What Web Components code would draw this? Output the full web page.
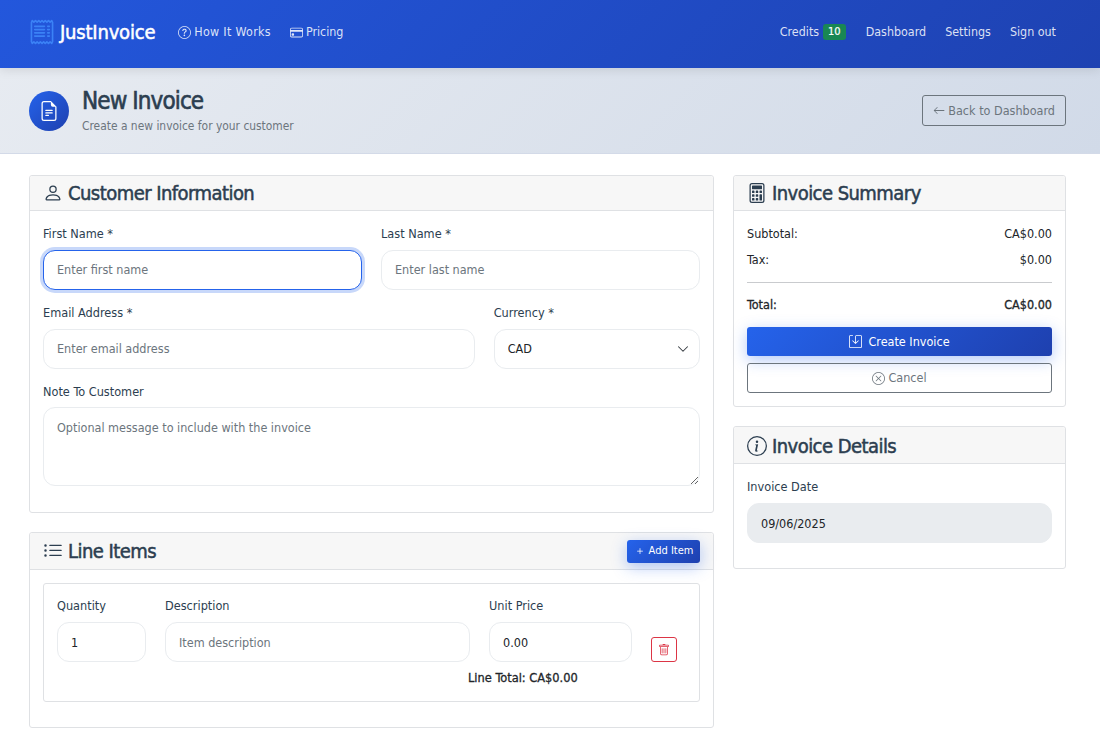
<!DOCTYPE html>
<html lang="en">
<head>
<meta charset="utf-8">
<title>JustInvoice - New Invoice</title>
<style>
    html, body { margin: 0; padding: 0; background: #fff; }
    body { font-family: "DejaVu Sans Condensed", "DejaVu Sans", sans-serif; font-size: 12.5px; line-height: 18px; color: #212529; }
</style>
</head>
<body>

<ji-navbar></ji-navbar>
<ji-page-header></ji-page-header>

<ji-layout>
    <div slot="left">
        <ji-card icon="person" heading="Customer Information" style="--head-height: 35px">
            <ji-row>
                <ji-field span="6" label="First Name *" placeholder="Enter first name" focused></ji-field>
                <ji-field span="6" label="Last Name *" placeholder="Enter last name"></ji-field>
                <ji-field span="8" label="Email Address *" placeholder="Enter email address"></ji-field>
                <ji-field span="4" label="Currency *" kind="select" value="CAD"></ji-field>
                <ji-field span="12" label="Note To Customer" kind="textarea" placeholder="Optional message to include with the invoice"></ji-field>
            </ji-row>
        </ji-card>

        <ji-card icon="list" heading="Line Items">
            <ji-button slot="action" variant="small" icon="plus">Add Item</ji-button>
            <ji-line-item></ji-line-item>
        </ji-card>
    </div>

    <div slot="right">
        <ji-card icon="calculator" heading="Invoice Summary" style="--head-height: 35px">
            <ji-summary></ji-summary>
        </ji-card>

        <ji-card icon="info" heading="Invoice Details" style="--title-shift: 2px">
            <ji-row>
                <ji-field span="12" label="Invoice Date" value="09/06/2025" readonly></ji-field>
            </ji-row>
        </ji-card>
    </div>
</ji-layout>

<script>
const ICONS = {
    receipt: '<path d="M1.92.506a.5.5 0 0 1 .434.14L3 1.293l.646-.647a.5.5 0 0 1 .708 0L5 1.293l.646-.647a.5.5 0 0 1 .708 0L7 1.293l.646-.647a.5.5 0 0 1 .708 0L9 1.293l.646-.647a.5.5 0 0 1 .708 0l.646.647.646-.647a.5.5 0 0 1 .708 0l.646.647.646-.647a.5.5 0 0 1 .801.13l.5 1A.5.5 0 0 1 15 2v12a.5.5 0 0 1-.053.224l-.5 1a.5.5 0 0 1-.8.13L13 14.707l-.646.647a.5.5 0 0 1-.708 0L11 14.707l-.646.647a.5.5 0 0 1-.708 0L9 14.707l-.646.647a.5.5 0 0 1-.708 0L7 14.707l-.646.647a.5.5 0 0 1-.708 0L5 14.707l-.646.647a.5.5 0 0 1-.708 0L3 14.707l-.646.647a.5.5 0 0 1-.801-.13l-.5-1A.5.5 0 0 1 1 14V2a.5.5 0 0 1 .053-.224l.5-1a.5.5 0 0 1 .367-.27zm.217 1.338L2 2.118v11.764l.137.274.51-.51a.5.5 0 0 1 .707 0l.646.647.646-.646a.5.5 0 0 1 .708 0l.646.646.646-.646a.5.5 0 0 1 .708 0l.646.646.646-.646a.5.5 0 0 1 .708 0l.646.646.646-.646a.5.5 0 0 1 .708 0l.646.646.646-.646a.5.5 0 0 1 .708 0l.509.509.137-.274V2.118l-.137-.274-.51.51a.5.5 0 0 1-.707 0L12 1.707l-.646.647a.5.5 0 0 1-.708 0L10 1.707l-.646.647a.5.5 0 0 1-.708 0L8 1.707l-.646.647a.5.5 0 0 1-.708 0L6 1.707l-.646.647a.5.5 0 0 1-.708 0L4 1.707l-.646.647a.5.5 0 0 1-.708 0l-.509-.51z"/><path d="M3 4.5a.5.5 0 0 1 .5-.5h6a.5.5 0 1 1 0 1h-6a.5.5 0 0 1-.5-.5zm0 2a.5.5 0 0 1 .5-.5h6a.5.5 0 1 1 0 1h-6a.5.5 0 0 1-.5-.5zm0 2a.5.5 0 0 1 .5-.5h6a.5.5 0 1 1 0 1h-6a.5.5 0 0 1-.5-.5zm0 2a.5.5 0 0 1 .5-.5h6a.5.5 0 0 1 0 1h-6a.5.5 0 0 1-.5-.5zm8-6a.5.5 0 0 1 .5-.5h1a.5.5 0 0 1 0 1h-1a.5.5 0 0 1-.5-.5zm0 2a.5.5 0 0 1 .5-.5h1a.5.5 0 0 1 0 1h-1a.5.5 0 0 1-.5-.5zm0 2a.5.5 0 0 1 .5-.5h1a.5.5 0 0 1 0 1h-1a.5.5 0 0 1-.5-.5zm0 2a.5.5 0 0 1 .5-.5h1a.5.5 0 0 1 0 1h-1a.5.5 0 0 1-.5-.5z"/>',
    question: '<path d="M8 15A7 7 0 1 1 8 1a7 7 0 0 1 0 14zm0 1A8 8 0 1 0 8 0a8 8 0 0 0 0 16z"/><path d="M5.255 5.786a.237.237 0 0 0 .241.247h.825c.138 0 .248-.113.266-.25.09-.656.54-1.134 1.342-1.134.686 0 1.314.343 1.314 1.168 0 .635-.374.927-.965 1.371-.673.489-1.206 1.06-1.168 1.987l.003.217a.25.25 0 0 0 .25.246h.811a.25.25 0 0 0 .25-.25v-.105c0-.718.273-.927 1.01-1.486.609-.463 1.244-.977 1.244-2.056 0-1.511-1.276-2.241-2.673-2.241-1.267 0-2.655.59-2.75 2.286zm1.557 5.763c0 .533.425.927 1.01.927.609 0 1.028-.394 1.028-.927 0-.552-.42-.94-1.029-.94-.584 0-1.009.388-1.009.94z"/>',
    card: '<path d="M0 4a2 2 0 0 1 2-2h12a2 2 0 0 1 2 2v8a2 2 0 0 1-2 2H2a2 2 0 0 1-2-2V4zm2-1a1 1 0 0 0-1 1v1h14V4a1 1 0 0 0-1-1H2zm13 4H1v5a1 1 0 0 0 1 1h12a1 1 0 0 0 1-1V7z"/><path d="M2 10a1 1 0 0 1 1-1h1a1 1 0 0 1 1 1v1a1 1 0 0 1-1 1H3a1 1 0 0 1-1-1v-1z"/>',
    file: '<path d="M5.5 7a.5.5 0 0 0 0 1h5a.5.5 0 0 0 0-1h-5zM5 9.5a.5.5 0 0 1 .5-.5h5a.5.5 0 0 1 0 1h-5a.5.5 0 0 1-.5-.5zm0 2a.5.5 0 0 1 .5-.5h2a.5.5 0 0 1 0 1h-2a.5.5 0 0 1-.5-.5z"/><path d="M9.5 0H4a2 2 0 0 0-2 2v12a2 2 0 0 0 2 2h8a2 2 0 0 0 2-2V4.5L9.5 0zm0 1v2A1.5 1.5 0 0 0 11 4.5h2V14a1 1 0 0 1-1 1H4a1 1 0 0 1-1-1V2a1 1 0 0 1 1-1h5.5z"/>',
    person: '<path d="M8 8a3 3 0 1 0 0-6 3 3 0 0 0 0 6zm2-3a2 2 0 1 1-4 0 2 2 0 0 1 4 0zm4 8c0 1-1 1-1 1H3s-1 0-1-1 1-4 6-4 6 3 6 4zm-1-.004c-.001-.246-.154-.986-.832-1.664C11.516 10.68 10.289 10 8 10c-2.29 0-3.516.68-4.168 1.332-.678.678-.83 1.418-.832 1.664h10z"/>',
    calculator: '<path d="M12 1a1 1 0 0 1 1 1v12a1 1 0 0 1-1 1H4a1 1 0 0 1-1-1V2a1 1 0 0 1 1-1h8zM4 0a2 2 0 0 0-2 2v12a2 2 0 0 0 2 2h8a2 2 0 0 0 2-2V2a2 2 0 0 0-2-2H4z"/><path d="M4 2.5a.5.5 0 0 1 .5-.5h7a.5.5 0 0 1 .5.5v2a.5.5 0 0 1-.5.5h-7a.5.5 0 0 1-.5-.5v-2zm0 4a.5.5 0 0 1 .5-.5h1a.5.5 0 0 1 .5.5v1a.5.5 0 0 1-.5.5h-1a.5.5 0 0 1-.5-.5v-1zm0 3a.5.5 0 0 1 .5-.5h1a.5.5 0 0 1 .5.5v1a.5.5 0 0 1-.5.5h-1a.5.5 0 0 1-.5-.5v-1zm0 3a.5.5 0 0 1 .5-.5h1a.5.5 0 0 1 .5.5v1a.5.5 0 0 1-.5.5h-1a.5.5 0 0 1-.5-.5v-1zm3-6a.5.5 0 0 1 .5-.5h1a.5.5 0 0 1 .5.5v1a.5.5 0 0 1-.5.5h-1a.5.5 0 0 1-.5-.5v-1zm0 3a.5.5 0 0 1 .5-.5h1a.5.5 0 0 1 .5.5v1a.5.5 0 0 1-.5.5h-1a.5.5 0 0 1-.5-.5v-1zm0 3a.5.5 0 0 1 .5-.5h1a.5.5 0 0 1 .5.5v1a.5.5 0 0 1-.5.5h-1a.5.5 0 0 1-.5-.5v-1zm3-6a.5.5 0 0 1 .5-.5h1a.5.5 0 0 1 .5.5v1a.5.5 0 0 1-.5.5h-1a.5.5 0 0 1-.5-.5v-1zm0 3a.5.5 0 0 1 .5-.5h1a.5.5 0 0 1 .5.5v4a.5.5 0 0 1-.5.5h-1a.5.5 0 0 1-.5-.5v-4z"/>',
    info: '<path d="M8 15A7 7 0 1 1 8 1a7 7 0 0 1 0 14zm0 1A8 8 0 1 0 8 0a8 8 0 0 0 0 16z"/><path d="m8.93 6.588-2.29.287-.082.38.45.083c.294.07.352.176.288.469l-.738 3.468c-.194.897.105 1.319.808 1.319.545 0 1.178-.252 1.465-.598l.088-.416c-.2.176-.492.246-.686.246-.275 0-.375-.193-.304-.533L8.93 6.588zM9 4.5a1 1 0 1 1-2 0 1 1 0 0 1 2 0z"/>',
    list: '<path fill-rule="evenodd" d="M5 11.5a.5.5 0 0 1 .5-.5h9a.5.5 0 0 1 0 1h-9a.5.5 0 0 1-.5-.5zm0-4a.5.5 0 0 1 .5-.5h9a.5.5 0 0 1 0 1h-9a.5.5 0 0 1-.5-.5zm0-4a.5.5 0 0 1 .5-.5h9a.5.5 0 0 1 0 1h-9a.5.5 0 0 1-.5-.5zm-3 1a1 1 0 1 0 0-2 1 1 0 0 0 0 2zm0 4a1 1 0 1 0 0-2 1 1 0 0 0 0 2zm0 4a1 1 0 1 0 0-2 1 1 0 0 0 0 2z"/>',
    back: '<path fill-rule="evenodd" d="M15 8a.5.5 0 0 0-.5-.5H2.707l3.147-3.146a.5.5 0 1 0-.708-.708l-4 4a.5.5 0 0 0 0 .708l4 4a.5.5 0 0 0 .708-.708L2.707 8.5H14.5A.5.5 0 0 0 15 8z"/>',
    cancel: '<path d="M8 15A7 7 0 1 1 8 1a7 7 0 0 1 0 14zm0 1A8 8 0 1 0 8 0a8 8 0 0 0 0 16z"/><path d="M4.646 4.646a.5.5 0 0 1 .708 0L8 7.293l2.646-2.647a.5.5 0 0 1 .708.708L8.707 8l2.647 2.646a.5.5 0 0 1-.708.708L8 8.707l-2.646 2.647a.5.5 0 0 1-.708-.708L7.293 8 4.646 5.354a.5.5 0 0 1 0-.708z"/>',
    plus: '<path d="M8 4a.5.5 0 0 1 .5.5v3h3a.5.5 0 0 1 0 1h-3v3a.5.5 0 0 1-1 0v-3h-3a.5.5 0 0 1 0-1h3v-3A.5.5 0 0 1 8 4z"/>',
    trash: '<path d="M5.5 5.5A.5.5 0 0 1 6 6v6a.5.5 0 0 1-1 0V6a.5.5 0 0 1 .5-.5zm2.5 0a.5.5 0 0 1 .5.5v6a.5.5 0 0 1-1 0V6a.5.5 0 0 1 .5-.5zm3 .5a.5.5 0 0 0-1 0v6a.5.5 0 0 0 1 0V6z"/><path fill-rule="evenodd" d="M14.5 3a1 1 0 0 1-1 1H13v9a2 2 0 0 1-2 2H5a2 2 0 0 1-2-2V4h-.5a1 1 0 0 1-1-1V2a1 1 0 0 1 1-1H6a1 1 0 0 1 1-1h2a1 1 0 0 1 1 1h3.5a1 1 0 0 1 1 1v1zM4.118 4 4 4.059V13a1 1 0 0 0 1 1h6a1 1 0 0 0 1-1V4.059L11.882 4H4.118zM2.5 3V2h11v1h-11z"/>',
    save: '<path d="M2 1a1 1 0 0 0-1 1v12a1 1 0 0 0 1 1h12a1 1 0 0 0 1-1V2a1 1 0 0 0-1-1H9.5a1 1 0 0 0-1 1v7.293l2.646-2.647a.5.5 0 0 1 .708.708l-3.5 3.5a.5.5 0 0 1-.708 0l-3.5-3.5a.5.5 0 1 1 .708-.708L7.5 9.293V2a2 2 0 0 1 2-2H14a2 2 0 0 1 2 2v12a2 2 0 0 1-2 2H2a2 2 0 0 1-2-2V2a2 2 0 0 1 2-2h2.5a.5.5 0 0 1 0 1H2z"/>'
}

// small helper, every icon is 16x16 like the icon font it comes from
function icon(name, size) {
    return `<svg width="${size}" height="${size}" viewBox="0 0 16 16" fill="currentColor" aria-hidden="true">${ICONS[name]}</svg>`
}

class JiNavbar extends HTMLElement {
    constructor() {
        super()
        this.attachShadow({ mode: 'open' })
        this.shadowRoot.innerHTML = `
            <style>
                :host {
                    display: flex;
                    position: relative;
                    z-index: 2;
                    height: 68px;
                    box-sizing: border-box;
                    padding: 0 44px 4px 29px;
                    align-items: center;
                    font-size: 12.4px;
                    color: rgba(255,255,255,.85);
                    background: linear-gradient(135deg, #2357dc, #1e42b2);
                    box-shadow: 0 2px 10px rgba(0,0,0,.1);
                }
                .brand {
                    display: flex;
                    align-items: center;
                    gap: 5px;
                    color: #fff;
                    font-size: 20px;
                    letter-spacing: -.2px;
                    -webkit-text-stroke: .5px #fff;
                    margin-right: 23px;
                }
                .brand svg { color: #3b82f6; }
                a {
                    display: flex;
                    align-items: center;
                    gap: 3px;
                    color: inherit;
                    text-decoration: none;
                    margin-right: 19px;
                }
                .wide { letter-spacing: .3px; }
                .spacer { flex: 1; }
                a:last-child { margin-right: 0; }
                .badge {
                    background: #198754;
                    color: #fff;
                    border-radius: 3px;
                    font-size: 11px;
                    -webkit-text-stroke: .2px #fff;
                    line-height: 16px;
                    padding: 0 5px;
                    margin: 0 1px;
                }
            </style>
            <div class="brand">${icon('receipt', 26)}<span>JustInvoice</span></div>
            <a href="#">${icon('question', 13)}<span class="wide">How It Works</span></a>
            <a href="#">${icon('card', 13)}<span>Pricing</span></a>
            <div class="spacer"></div>
            <a href="#"><span>Credits</span><span class="badge">10</span></a>
            <a href="#">Dashboard</a>
            <a href="#">Settings</a>
            <a href="#">Sign out</a>
        `
    }
}

class JiPageHeader extends HTMLElement {
    constructor() {
        super()
        this.attachShadow({ mode: 'open' })
        this.shadowRoot.innerHTML = `
            <style>
                :host {
                    display: flex;
                    height: 86px;
                    box-sizing: border-box;
                    padding: 0 34px 0 29px;
                    align-items: center;
                    background: linear-gradient(135deg, #e7ebf1, #d1dae8);
                    border-bottom: 1px solid #d3dae8;
                }
                .circle {
                    display: flex;
                    width: 40px;
                    height: 40px;
                    border-radius: 50%;
                    align-items: center;
                    justify-content: center;
                    color: #fff;
                    margin: 1px 13px 0 0;
                    background: linear-gradient(135deg, #2563eb, #1e40af);
                }
                h1 {
                    margin: 1px 0 0;
                    font-size: 24px;
                    line-height: 29px;
                    font-weight: 400;
                    letter-spacing: -.9px;
                    -webkit-text-stroke: .6px #2c3e50;
                    color: #2c3e50;
                }
                p { margin: 1px 0 0; font-size: 11.9px; color: #6c757d; line-height: 18px; }
                .text { flex: 1; }
                ji-button { width: 144px; white-space: nowrap; --btn-height: 31px; }
            </style>
            <div class="circle">${icon('file', 20)}</div>
            <div class="text">
                <h1>New Invoice</h1>
                <p>Create a new invoice for your customer</p>
            </div>
            <ji-button variant="outline" icon="back">Back to Dashboard</ji-button>
        `
    }
}

class JiLayout extends HTMLElement {
    constructor() {
        super()
        this.attachShadow({ mode: 'open' })
        this.shadowRoot.innerHTML = `
            <style>
                :host {
                    display: grid;
                    grid-template-columns: repeat(12, 1fr);
                    column-gap: 19px;
                    align-items: start;
                    padding: 21px 34px 27px 29px;
                }
                .left { grid-column: span 8; }
                .right { grid-column: span 4; }
            </style>
            <div class="left"><slot name="left"></slot></div>
            <div class="right"><slot name="right"></slot></div>
        `
    }
}

class JiCard extends HTMLElement {
    constructor() {
        super()
        this.attachShadow({ mode: 'open' })
        this.shadowRoot.innerHTML = `
            <style>
                :host {
                    display: block;
                    border: 1px solid #dfe1e4;
                    border-radius: 3px;
                    margin-bottom: 19px;
                    background: #fff;
                }
                header {
                    display: flex;
                    height: var(--head-height, 37px);
                    box-sizing: border-box;
                    padding: 0 13px;
                    align-items: center;
                    background: #f7f7f7;
                    border-bottom: 1px solid #dfe1e4;
                    border-radius: 3px 3px 0 0;
                }
                h5 {
                    display: flex;
                    flex: 1;
                    align-items: center;
                    gap: 5px;
                    margin: 0;
                    padding-top: var(--title-shift, 0);
                    font-size: 20px;
                    line-height: 24px;
                    font-weight: 400;
                    color: #2c3e50;
                }
                h5 span {
                    letter-spacing: -.55px;
                    -webkit-text-stroke: .5px #2c3e50;
                }
                .body { padding: 13px; }
            </style>
            <header>
                <h5>${icon(this.getAttribute('icon'), 20)}<span>${this.getAttribute('heading')}</span></h5>
                <slot name="action"></slot>
            </header>
            <div class="body"><slot></slot></div>
        `
    }
}

// 12 column row, same gutter as the page columns
class JiRow extends HTMLElement {
    constructor() {
        super()
        this.attachShadow({ mode: 'open' })
        this.shadowRoot.innerHTML = `
            <style>
                :host {
                    display: grid;
                    grid-template-columns: repeat(12, 1fr);
                    column-gap: 19px;
                    align-items: end;
                }
            </style>
            <slot></slot>
        `
    }
}

class JiField extends HTMLElement {
    constructor() {
        super()
        this.attachShadow({ mode: 'open' })
        const kind = this.getAttribute('kind') || 'input'
        const placeholder = this.getAttribute('placeholder') || ''
        const value = this.getAttribute('value') || ''
        let control = `<input type="text" placeholder="${placeholder}" value="${value}">`
        if (kind === 'select') {
            control = `<select><option>${value}</option></select>
                <svg class="chevron" width="12" height="12" viewBox="0 0 16 16"><path fill="none" stroke="#343a40" stroke-linecap="round" stroke-linejoin="round" stroke-width="1.4" d="m2 5 6 6 6-6"/></svg>`
        }
        if (kind === 'textarea') {
            control = `<textarea placeholder="${placeholder}"></textarea>`
        }
        this.style.gridColumn = `span ${this.getAttribute('span') || 12}`
        this.shadowRoot.innerHTML = `
            <style>
                :host { display: block; margin-bottom: 13px; min-width: 0; }
                :host([flush]) { margin-bottom: 0; }
                :host([readonly]) { margin-bottom: 12px; }
                label {
                    display: block;
                    padding-top: 1px;
                    margin-bottom: 7px;
                    font-size: 12.6px;
                    color: #2c3e50;
                }
                :host([flush]) label { padding-top: 0; }
                .control { position: relative; display: block; }
                input, select, textarea {
                    display: block;
                    width: 100%;
                    height: 40px;
                    box-sizing: border-box;
                    margin: 0;
                    padding: 0 13px;
                    font: inherit;
                    color: #212529;
                    background: #fff;
                    border: 1px solid #e9ecef;
                    border-radius: 12px;
                    outline: none;
                    appearance: none;
                }
                input { padding-bottom: 2px; }
                :host([flush]) input, :host([readonly]) input { padding-bottom: 0; }
                ::placeholder { color: #6c757d; opacity: 1; }
                textarea {
                    height: 79px;
                    margin-top: -1px;
                    padding: 11px 13px;
                    resize: vertical;
                }
                .chevron { position: absolute; right: 11px; top: 14px; }
                :host([focused]) input {
                    border-color: #2563eb;
                    box-shadow: 0 0 0 3px rgba(37,99,235,.25);
                }
                :host([readonly]) input { background: #e9ecef; border-color: #e9ecef; }
            </style>
            <label>${this.getAttribute('label')}</label>
            <div class="control">${control}</div>
        `
        if (this.hasAttribute('readonly')) {
            this.shadowRoot.querySelector('input').readOnly = true
        }
    }
}

class JiButton extends HTMLElement {
    constructor() {
        super()
        this.attachShadow({ mode: 'open' })
        const iconName = this.getAttribute('icon')
        this.shadowRoot.innerHTML = `
            <style>
                :host { display: block; }
                button {
                    display: flex;
                    width: 100%;
                    height: var(--btn-height, 30px);
                    box-sizing: border-box;
                    padding: 0 10px;
                    align-items: center;
                    justify-content: center;
                    gap: 3px;
                    font: inherit;
                    color: #6c757d;
                    background: transparent;
                    border: 1px solid #6c757d;
                    border-radius: 3px;
                }
                :host([variant="primary"]) button,
                :host([variant="small"]) button {
                    color: #fff;
                    border: 0;
                    background: linear-gradient(135deg, #2563eb, #1e40af);
                    box-shadow: 0 4px 15px rgba(37,99,235,.35);
                }
                :host([variant="primary"]) button { height: 29px; gap: 6px; }
                :host([variant="small"]) { width: 73px; }
                :host([variant="small"]) button {
                    height: 23px;
                    padding: 0;
                    font-size: 11px;
                    gap: 3px;
                }
            </style>
            <button type="button">${iconName ? icon(iconName, this.getAttribute('variant') === 'small' ? 12 : 13) : ''}<span><slot></slot></span></button>
        `
    }
}

class JiSummary extends HTMLElement {
    constructor() {
        super()
        this.attachShadow({ mode: 'open' })
        this.shadowRoot.innerHTML = `
            <style>
                :host { display: block; padding-top: 1px; }
                .row { display: flex; justify-content: space-between; margin-bottom: 8px; }
                hr { border: 0; border-top: 1px solid #c9cbce; margin: 13px 0 13px; }
                .total { -webkit-text-stroke: .3px #212529; margin-bottom: 13px; }
                ji-button + ji-button { margin-top: 7px; }
            </style>
            <div class="row"><span>Subtotal:</span><span>CA$0.00</span></div>
            <div class="row" style="margin-bottom:0"><span>Tax:</span><span>$0.00</span></div>
            <hr>
            <div class="row total"><span>Total:</span><span>CA$0.00</span></div>
            <ji-button variant="primary" icon="save">Create Invoice</ji-button>
            <ji-button variant="outline" icon="cancel">Cancel</ji-button>
        `
    }
}

class JiLineItem extends HTMLElement {
    constructor() {
        super()
        this.attachShadow({ mode: 'open' })
        this.shadowRoot.innerHTML = `
            <style>
                :host {
                    display: block;
                    padding: 13px 13px 14px;
                    margin-bottom: 12px;
                    border: 1px solid #dfe1e4;
                    border-radius: 3px;
                }
                .remove-cell { grid-column: span 1; margin-bottom: 0; }
                .remove {
                    display: flex;
                    width: 26px;
                    height: 25px;
                    box-sizing: border-box;
                    padding: 0;
                    align-items: center;
                    justify-content: center;
                    color: #dc3545;
                    background: transparent;
                    border: 1px solid #dc3545;
                    border-radius: 3px;
                }
                .line-total {
                    margin: 7px 0 0 411px;
                    font-size: 12.7px;
                    -webkit-text-stroke: .3px #212529;
                }
            </style>
            <ji-row>
                <ji-field flush span="2" label="Quantity" value="1"></ji-field>
                <ji-field flush span="6" label="Description" placeholder="Item description"></ji-field>
                <ji-field flush span="3" label="Unit Price" value="0.00"></ji-field>
                <div class="remove-cell"><button class="remove" type="button">${icon('trash', 12)}</button></div>
            </ji-row>
            <div class="line-total">Line Total: CA$0.00</div>
        `
    }
}

customElements.define('ji-button', JiButton)
customElements.define('ji-row', JiRow)
customElements.define('ji-field', JiField)
customElements.define('ji-navbar', JiNavbar)
customElements.define('ji-page-header', JiPageHeader)
customElements.define('ji-layout', JiLayout)
customElements.define('ji-card', JiCard)
customElements.define('ji-summary', JiSummary)
customElements.define('ji-line-item', JiLineItem)
</script>
</body>
</html>
